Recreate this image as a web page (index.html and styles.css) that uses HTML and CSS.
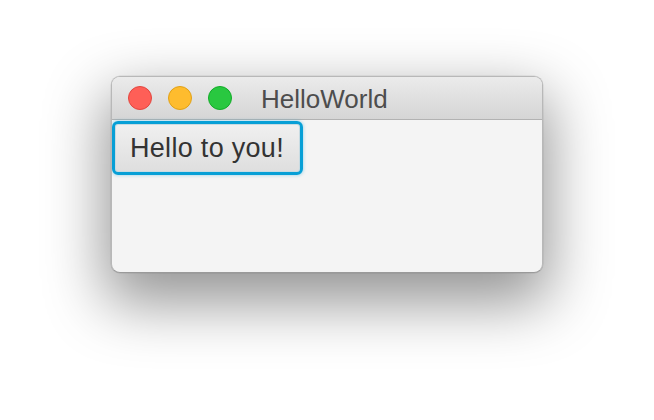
FILE: index.html
```html
<!DOCTYPE html>
<html>
<head>
<meta charset="utf-8">
<link rel="stylesheet" href="styles.css">
</head>
<body>
<div class="stage">
  <div class="window">
    <div class="titlebar">
      <div class="lights">
        <span class="light red"></span>
        <span class="light yellow"></span>
        <span class="light green"></span>
      </div>
      <div class="title">HelloWorld</div>
    </div>
    <div class="content">
      <button class="btn">Hello to you!</button>
    </div>
  </div>
</div>
</body>
</html>
```
FILE: styles.css
```css
html, body {
  margin: 0;
  padding: 0;
  background: #ffffff;
}
.stage {
  width: 654px;
  height: 420px;
  display: flex;
  justify-content: flex-start;
  align-items: flex-start;
  padding: 76px 0 0 111px;
  box-sizing: border-box;
}
.window {
  width: 432px;
  height: 197px;
  flex: none;
  box-sizing: border-box;
  border: 1px solid #b8b8b8;
  border-bottom-color: #9a9a9a;
  border-radius: 9px;
  overflow: hidden;
  background: #f4f4f4;
  box-shadow: 0 24px 60px 6px rgba(0,0,0,0.42), 0 0 0 0.5px rgba(0,0,0,0.1);
  display: flex;
  flex-direction: column;
  font-family: "Liberation Sans", Arial, sans-serif;
}
.titlebar {
  height: 43px;
  flex: none;
  box-sizing: border-box;
  background: linear-gradient(#ebebeb, #d5d5d5);
  border-bottom: 1px solid #b2b2b2;
  display: flex;
  align-items: center;
  padding-left: 16px;
}
.lights {
  display: flex;
  gap: 16px;
}
.light {
  width: 24px;
  height: 24px;
  border-radius: 50%;
  box-sizing: border-box;
}
.red { background: #fe5f57; border: 1px solid #e2463f; }
.yellow { background: #febc2e; border: 1px solid #e1a116; }
.green { background: #29c840; border: 1px solid #12ac28; }
.title {
  margin-left: 29px;
  font-size: 26px;
  color: #4d4d4d;
  line-height: 1;
  margin-top: 1px;
}
.content {
  flex: 1;
  padding: 0;
}
.btn {
  display: block;
  width: 191px;
  height: 54px;
  margin: 1px 0 0 0;
  box-sizing: border-box;
  border: 3px solid #079fd6;
  border-radius: 6px;
  background: linear-gradient(#f0f0f0, #dedede);
  box-shadow: inset 0 0 0 1px #c8dbe2, 0 0 3px 1px rgba(7,159,214,0.25);
  font-family: "Liberation Sans", Arial, sans-serif;
  font-size: 27px;
  letter-spacing: 0.3px;
  color: #333333;
  padding: 0 0 0 15px;
  text-align: left;
}
```
